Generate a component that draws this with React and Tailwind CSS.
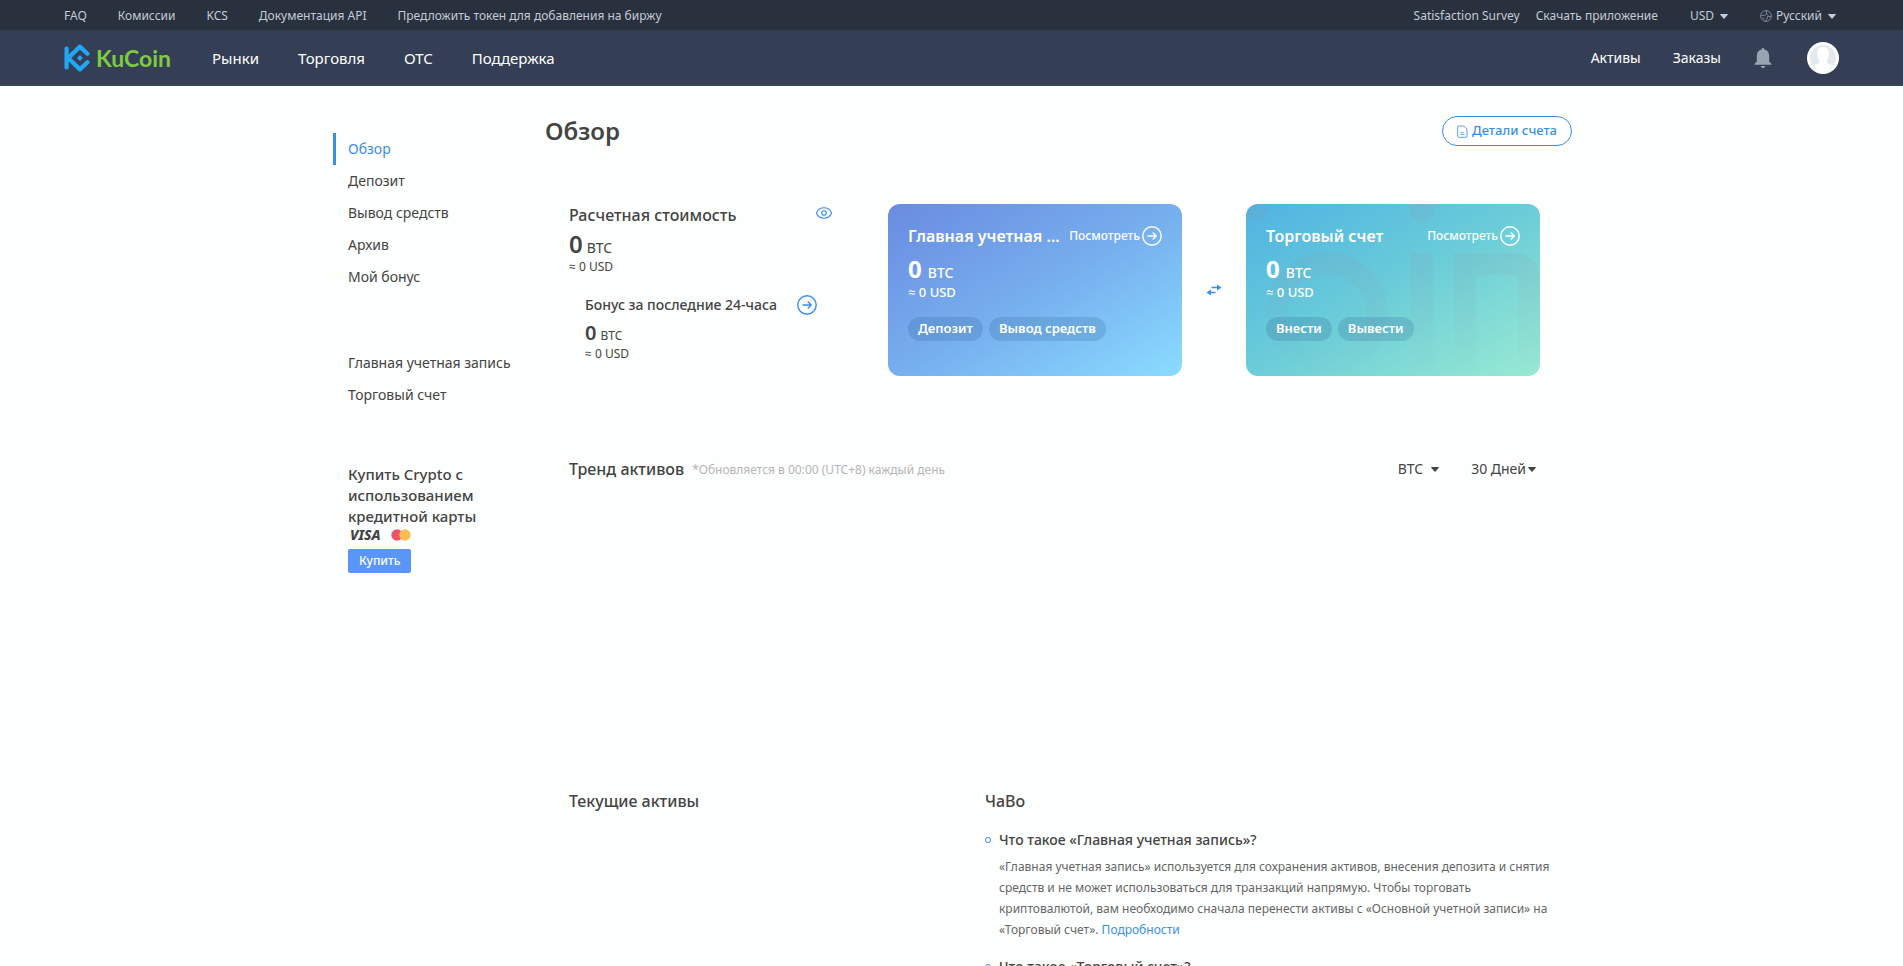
import { Eye } from "lucide-react";

const TOP_LINKS = ["FAQ", "Комиссии", "KCS", "Документация API", "Предложить токен для добавления на биржу"];
const NAV_LINKS = ["Рынки", "Торговля", "OTC", "Поддержка"];
const SIDE_LINKS = ["Обзор", "Депозит", "Вывод средств", "Архив", "Мой бонус"];
const ACCOUNT_LINKS = ["Главная учетная запись", "Торговый счет"];

function Caret() {
  return (
    <svg viewBox="0 0 8 5" className="w-2 shrink-0 pointer-events-none" aria-hidden="true">
      <path d="M0.5 0.5h7L4 4.5z" fill="currentColor" stroke="currentColor" strokeLinejoin="round" />
    </svg>
  );
}

function Picker({ label, value, className }) {
  return (
    <label className={`flex items-center ${className}`}>
      <select aria-label={label} defaultValue={value} className="appearance-none bg-transparent field-sizing-content outline-none cursor-pointer">
        <option>{value}</option>
      </select>
      <Caret />
    </label>
  );
}

function ArrowCircle() {
  return (
    <svg viewBox="0 0 20 20" className="w-5 h-5 shrink-0" fill="none" stroke="currentColor" aria-hidden="true">
      <circle cx="10" cy="10" r="9.2" strokeWidth="1.4" />
      <path d="M5.5 10h8.5M10.8 6.6l3.4 3.4-3.4 3.4" strokeWidth="1.4" />
    </svg>
  );
}

function GlobeIcon() {
  return (
    <svg viewBox="0 0 12 12" className="w-3 h-3 ml-8 mr-1 shrink-0" fill="none" stroke="#7b8595" aria-hidden="true">
      <circle cx="6" cy="6" r="5.4" />
      <path d="M6.5 1v3L4.500 5.500h-3M6.500 4l2 1.500M11 6.500H7.500v2L6 9.500v2M2.500 8l2 1" />
    </svg>
  );
}

function DocIcon() {
  return (
    <svg viewBox="0 0 11 13" className="w-[11px] h-[13px] shrink-0" fill="none" stroke="currentColor" strokeWidth="0.8" aria-hidden="true">
      <path d="M1.5 1H7l3 3v7.500a.8.8 0 01-.8.8H1.500a.8.8 0 01-.8-.8V1.800a.8.8 0 01.8-.8z" />
      <path d="M3.500 7.500h3M3.500 9.500h4" />
    </svg>
  );
}

function Logo() {
  return (
    <a href="#home" className="flex items-center gap-1.5 w-[108px]" aria-label="KuCoin">
      <svg viewBox="0 0 80 86" className="w-[26px] h-7 shrink-0" fill="none" stroke="#22a7f7" strokeWidth="13" strokeLinecap="round" strokeLinejoin="round" aria-hidden="true">
        <path d="M8 14v58" />
        <path d="M72 30L49 8 13 43l36 35 23-22" />
        <path d="M49 34l9 9-9 9-9-9z" fill="#22a7f7" stroke="none" />
      </svg>
      <span className="font-['Lato'] text-[23px] leading-7 font-bold text-[#7ecb3f]">KuCoin</span>
    </a>
  );
}

function Header() {
  return (
    <header className="text-white">
      <div className="flex items-center justify-between h-[30px] pt-0.5 pl-16 pr-[67px] bg-[#29313f] text-xs text-[#c3cbd6]">
        <div className="flex gap-[31px]">
          {TOP_LINKS.map((text) => (
            <a key={text} href="#top">{text}</a>
          ))}
        </div>
        <div className="flex items-center">
          <a href="#survey" className="mr-4">Satisfaction Survey</a>
          <a href="#app" className="mr-8">Скачать приложение</a>
          <Picker label="Валюта" value="USD" className="gap-1.5" />
          <GlobeIcon />
          <Picker label="Язык" value="Русский" className="gap-1.5" />
        </div>
      </div>
      <div className="flex items-center justify-between h-14 pt-0.5 px-16 bg-[#343f55] border-b-2 border-[#3a4353]">
        <div className="flex items-center">
          <Logo />
          <nav className="flex gap-[39px] ml-10 text-[15px]">
            {NAV_LINKS.map((text) => (
              <a key={text} href="#nav">{text}</a>
            ))}
          </nav>
        </div>
        <div className="flex items-center gap-8 text-sm">
          <a href="#assets">Активы</a>
          <a href="#orders">Заказы</a>
          <button type="button" aria-label="Уведомления" className="text-[#98a3b3]">
            <svg viewBox="0 0 20 22" className="w-5 h-[22px]" fill="currentColor" aria-hidden="true">
              <path d="M10 1c.9 0 1.4.6 1.4 1.5C14.6 3.2 16.2 5.8 16.2 9v5.5l2.300 2.500v.8h-17V17l2.300-2.500V9c0-3.200 1.600-5.800 4.800-6.500C8.600 1.600 9.100 1 10 1zM7.800 19h4.400c-.2 1.400-1 2-2.200 2s-2-.6-2.200-2z" />
            </svg>
          </button>
          <button type="button" aria-label="Профиль" className="ml-0.5">
            <svg viewBox="0 0 32 32" className="w-8 h-8" aria-hidden="true">
              <circle cx="16" cy="16" r="16" fill="#fff" />
              <circle cx="16" cy="16" r="13" fill="#e3e9ef" />
              <path d="M16 5c4 0 6 2.800 6 6.500 0 3.500-1.500 5.500-2.500 7 0 2.500 1.500 3 6 5C23 27 20 29 16 29s-7-2-9.500-5.500c4.500-2 6-2.500 6-5-1-1.500-2.500-3.500-2.500-7C10 7.800 12 5 16 5z" fill="#fff" />
            </svg>
          </button>
        </div>
      </div>
    </header>
  );
}

function Sidebar() {
  return (
    <aside className="w-[212px] shrink-0 pt-[47px]">
      <nav className="flex flex-col text-sm leading-8">
        {SIDE_LINKS.map((text, i) => (
          <a
            key={text}
            href="#side"
            className={i === 0 ? "border-l-3 border-[#3a8ee6] pl-3 text-[#3a8ee6]" : "pl-[15px]"}
          >
            {text}
          </a>
        ))}
      </nav>
      <nav className="flex flex-col mt-[54px] pl-[15px] text-sm leading-8">
        {ACCOUNT_LINKS.map((text) => (
          <a key={text} href="#account">{text}</a>
        ))}
      </nav>
      <div className="mt-[53px] pl-[15px]">
        <p className="w-[140px] text-[15px] leading-[21px] font-medium">Купить Crypto с использованием кредитной карты</p>
        <div className="flex items-center h-4 pl-0.5 gap-2.5">
          <span className="text-sm leading-4 font-extrabold italic">VISA</span>
          <svg viewBox="0 0 20 12" className="w-5 h-3" aria-hidden="true">
            <circle cx="6" cy="6" r="5.7" fill="#f0526a" />
            <circle cx="14" cy="6" r="5.7" fill="#fbbd53" />
          </svg>
        </div>
        <button type="button" className="mt-1.5 h-6 px-[11px] rounded-xs bg-[#5a95fa] text-xs font-medium text-white">Купить</button>
      </div>
    </aside>
  );
}

function Summary() {
  return (
    <div className="w-[264px] shrink-0">
      <div className="flex items-center justify-between">
        <h2 className="text-base leading-[22px] font-medium">Расчетная стоимость</h2>
        <button type="button" aria-label="Скрыть баланс" className="mb-1 text-[#3a8ee6]">
          <Eye size={18} strokeWidth={1.5} />
        </button>
      </div>
      <p className="flex items-baseline gap-1 mt-1 text-sm leading-none">
        <b className="text-2xl leading-7 font-semibold">0</b> BTC
      </p>
      <p className="mt-px text-xs leading-4">≈ 0 USD</p>
      <div className="mt-[18px] px-4">
        <div className="flex items-center justify-between h-6">
          <h3 className="text-sm font-medium">Бонус за последние 24-часа</h3>
          <a href="#bonus" aria-label="Бонус" className="text-[#3a8ee6]"><ArrowCircle /></a>
        </div>
        <p className="flex items-baseline gap-1 mt-1 text-xs leading-none">
          <b className="text-xl leading-6 font-semibold">0</b> BTC
        </p>
        <p className="mt-px text-xs leading-4">≈ 0 USD</p>
      </div>
    </div>
  );
}

function AccountCard({ title, actions, className, children }) {
  return (
    <section className={`relative w-[294px] h-[172px] shrink-0 overflow-hidden rounded-xl px-5 pt-5 text-white ${className}`}>
      {children}
      <div className="relative">
        <div className="flex items-center justify-between h-6">
          <h2 className="text-base font-semibold whitespace-nowrap">{title}</h2>
          <a href="#view" className="flex items-center gap-0.5 text-xs font-medium">
            Посмотреть
            <ArrowCircle />
          </a>
        </div>
        <p className="flex items-baseline gap-1.5 mt-[7px] text-sm leading-none font-medium">
          <b className="text-2xl leading-7 font-bold">0</b> BTC
        </p>
        <p className="mt-px text-[13px] leading-4 font-medium">≈ 0 USD</p>
        <div className="flex gap-1.5 mt-[17px]">
          {actions.map((text) => (
            <button key={text} type="button" className="h-6 px-2.5 rounded-full bg-[#2a5a90]/20 text-[13px] font-semibold whitespace-nowrap">{text}</button>
          ))}
        </div>
      </div>
    </section>
  );
}

// faint rings and bars behind the card content, fading towards the bottom
function CardPattern() {
  return (
    <svg viewBox="0 0 294 172" className="absolute inset-0 w-full h-full" fill="none" stroke="url(#cardFade)" strokeWidth="22" aria-hidden="true">
      <defs>
        <linearGradient id="cardFade" gradientUnits="userSpaceOnUse" x1="0" y1="0" x2="0" y2="172">
          <stop offset="0.3" stopColor="#8c96a8" stopOpacity="0.14" />
          <stop offset="0.95" stopColor="#8c96a8" stopOpacity="0.02" />
        </linearGradient>
      </defs>
      <circle cx="8" cy="2" r="15" fill="url(#cardFade)" stroke="none" />
      <circle cx="81" cy="109" r="50" />
      <circle cx="176" cy="7" r="12" fill="url(#cardFade)" stroke="none" />
      <path d="M176 49v118" />
      <path d="M219 167V60h50q14 0 14 14v93" />
    </svg>
  );
}

function SwapIcon() {
  return (
    <svg viewBox="0 0 16 12" className="w-4 h-3" fill="none" stroke="#3a8ee6" strokeWidth="1.4" aria-hidden="true">
      <path d="M5.5 3.5h6M4.5 8.500h5" />
      <path d="M11 .5l4.500 3L11 6.500zM5 5.500l-4.500 3 4.500 3z" fill="#3a8ee6" stroke="none" />
    </svg>
  );
}

function Question({ title, children }) {
  return (
    <article className="flex gap-2 mb-[15px]">
      <span className="w-1.5 h-1.5 mt-[9px] shrink-0 rounded-full border border-[#3a8ee6]" />
      <div className="flex-1">
        <h3 className="text-sm leading-6 font-medium">{title}</h3>
        <p className="mt-1 text-xs leading-[21px] text-[#666]">{children}</p>
      </div>
    </article>
  );
}

export default function App() {
  return (
    <div className="h-screen overflow-hidden bg-[#fdfefe] text-[#444] font-['Noto_Sans','Open_Sans',sans-serif]">
      <Header />
      <div className="pl-0.5">
        <div className="flex max-w-[1239px] mx-auto">
          <Sidebar />
          <main className="flex-1 pt-[30px]">
            <div className="flex items-center justify-between">
              <h1 className="text-2xl leading-[30px] font-semibold">Обзор</h1>
              <button type="button" className="flex items-center justify-center gap-1 w-[130px] h-[30px] rounded-full border border-[#3a8ee6] bg-white text-[13px] font-medium text-[#3a8ee6]">
                <DocIcon />
                Детали счета
              </button>
            </div>

            <div className="pl-6 pr-8">
              <div className="flex items-start justify-between mt-[58px]">
                <Summary />
                <div className="flex items-center">
                  <AccountCard title="Главная учетная ..." actions={["Депозит", "Вывод средств"]} className="bg-linear-to-br from-[#6a8be0] via-[#76aeee] to-[#8adcff]" />
                  <button type="button" aria-label="Перевод" className="flex justify-center w-16"><SwapIcon /></button>
                  <AccountCard title="Торговый счет" actions={["Внести", "Вывести"]} className="bg-linear-to-br from-[#4fb3e3] via-[#6bcdd8] to-[#98ead2]">
                    <CardPattern />
                  </AccountCard>
                </div>
              </div>

              <div className="flex items-center justify-between h-6 mt-[81px]">
                <div className="flex items-center gap-2">
                  <h2 className="text-base font-medium">Тренд активов</h2>
                  <span className="pt-0.5 text-xs text-[#b5b5b5]">*Обновляется в 00:00 (UTC+8) каждый день</span>
                </div>
                <div className="flex items-center gap-8 pr-1 text-sm">
                  <Picker label="Монета" value="BTC" className="gap-2" />
                  <Picker label="Период" value="30 Дней" className="gap-0.5" />
                </div>
              </div>

              <div className="flex mt-[308px]">
                <section className="w-[416px] shrink-0">
                  <h2 className="text-base leading-6 font-medium">Текущие активы</h2>
                </section>
                <section className="flex-1 -mr-6">
                  <h2 className="mb-[15px] text-base leading-6 font-medium">ЧаВо</h2>
                  <Question title="Что такое «Главная учетная запись»?">
                    «Главная учетная запись» используется для сохранения активов, внесения депозита и снятия средств и не
                    может использоваться для транзакций напрямую. Чтобы торговать криптовалютой, вам необходимо сначала
                    перенести активы с «Основной учетной записи» на «Торговый счет».{" "}
                    <a href="#more" className="text-[#3a8ee6]">Подробности</a>
                  </Question>
                  <Question title="Что такое «Торговый счет»?" />
                </section>
              </div>
            </div>
          </main>
        </div>
      </div>
    </div>
  );
}
